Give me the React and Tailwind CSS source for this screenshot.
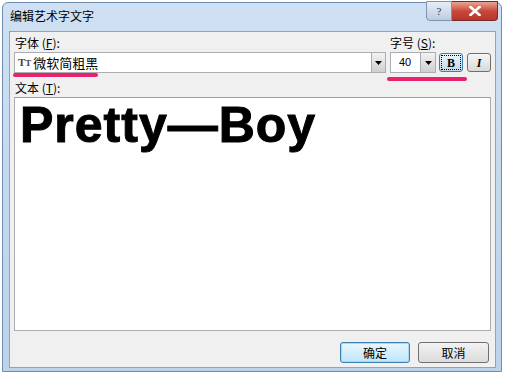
import React from "react";

const cjk = { fontFamily: '"Noto Sans CJK SC", "Liberation Sans", sans-serif' };

function Arrow() {
  return (
    <svg width="7" height="4" viewBox="0 0 7 4">
      <path d="M0 0 H7 L3.5 4 Z" fill="#000" />
    </svg>
  );
}

export default function App() {
  return (
    <div className="w-[506px] h-[377px] bg-white overflow-hidden relative" style={cjk}>
      <div className="absolute left-[2px] top-[2px] w-[500px] h-[370px] rounded-t-[6px] border border-[#6f8db0] bg-gradient-to-b from-[#cfe0f2] via-[#c4d8ee] to-[#bdd3ea] flex flex-col">
        {/* title bar */}
        <div className="h-[28px] flex items-start relative">
          <span className="ml-[7px] mt-[5px] text-[12px] leading-[16px] text-black">编辑艺术字文字</span>
          <div className="absolute right-[3px] -top-[2px] flex">
            <div className="w-[26px] h-[20px] rounded-bl-[4px] border border-[#7f93ab] bg-gradient-to-b from-[#e6eef7] to-[#bccde2] flex items-center justify-center text-[11px] text-[#333]" style={{ fontFamily: '"Liberation Serif", serif' }}>?</div>
            <div className="w-[46px] h-[20px] rounded-br-[4px] border border-[#7a2a22] border-l-0 bg-gradient-to-b from-[#e9a394] via-[#c9483a] to-[#b8352a] flex items-center justify-center">
              <svg width="12" height="10" viewBox="0 0 12 10">
                <path d="M1.5 1 L10.5 9 M10.5 1 L1.5 9" stroke="#fff" strokeWidth="2.6" strokeLinecap="square" />
              </svg>
            </div>
          </div>
        </div>
        {/* client */}
        <div className="ml-[6px] mr-[5px] h-[337px] bg-[#f0f0f0] border border-[#8ea4bd] relative">
          <div className="pl-[5px] pt-[4px] text-[12px] leading-[14px] text-black flex">
            <span className="w-[375px]">字体 (<span className="underline">F</span>):</span>
            <span>字号 (<span className="underline">S</span>):</span>
          </div>
          <div className="flex mt-[2px] pl-[4px] items-start">
            <div className="w-[372px] h-[21px] bg-white border border-[#abadb3] flex items-center">
              <span className="ml-[3px] text-[11px] font-bold text-[#444] leading-none" style={{ fontFamily: '"Liberation Serif", serif' }}>T<span className="text-[9px]">T</span></span>
              <span className="ml-[2px] text-[13px] leading-none">微软简粗黑</span>
              <div className="ml-auto w-[14px] h-[19px] border-l border-[#abadb3] bg-gradient-to-b from-[#f2f2f2] to-[#cfcfcf] flex items-center justify-center">
                <Arrow />
              </div>
            </div>
            <div className="ml-[4px] w-[46px] h-[21px] bg-white border border-[#abadb3] flex items-center">
              <span className="ml-[8px] text-[11px] leading-none" style={{ fontFamily: '"Liberation Sans", sans-serif' }}>40</span>
              <div className="ml-auto w-[15px] h-[19px] border-l border-[#abadb3] bg-gradient-to-b from-[#f2f2f2] to-[#cfcfcf] flex items-center justify-center">
                <Arrow />
              </div>
            </div>
            <div className="ml-[3px] mt-[1px] w-[24px] h-[19px] rounded-[3px] border border-[#3c7fb1] bg-gradient-to-b from-[#eaf6fd] to-[#c4d6e4] p-[1px]">
              <div className="w-full h-full border border-dotted border-black flex items-center justify-center text-[12px] font-bold leading-none" style={{ fontFamily: '"Liberation Serif", serif' }}>B</div>
            </div>
            <div className="ml-[4px] mt-[1px] w-[24px] h-[19px] rounded-[3px] border border-[#707070] bg-gradient-to-b from-[#f6f6f6] to-[#d9d9d9] flex items-center justify-center text-[12px] italic font-bold leading-none" style={{ fontFamily: '"Liberation Serif", serif' }}>I</div>
          </div>
          <div className="pl-[5px] mt-[8px] text-[12px] leading-[14px]">
            文本 (<span className="underline">T</span>):
          </div>
          <div className="ml-[4px] mt-[2px] w-[477px] h-[234px] bg-white border border-[#abadb3] border-t-[#a0a0a0]">
            <div className="ml-[5px] -mt-[1px] text-[50px] font-bold leading-[56px] text-black tracking-[1px] [-webkit-text-stroke:1px_black]" style={{ fontFamily: '"Liberation Sans", Arial, sans-serif' }}>
              Pretty—Boy
            </div>
          </div>
          <div className="flex justify-end mt-[11px] mr-[6px] gap-[8px]">
            <div className="w-[70px] h-[21px] rounded-[3px] border border-[#3c7fb1] bg-gradient-to-b from-[#eaf6fd] to-[#bee6fd] flex items-center justify-center text-[12px] shadow-[inset_0_0_0_1px_#a6d9f4]">确定</div>
            <div className="w-[71px] h-[21px] rounded-[3px] border border-[#707070] bg-gradient-to-b from-[#f2f2f2] to-[#dcdcdc] flex items-center justify-center text-[12px]">取消</div>
          </div>
          {/* highlight marks */}
          <div className="absolute left-[3px] top-[41px] w-[85px] h-[4px] rounded-full bg-[#e8226c]" />
          <div className="absolute left-[377px] top-[45px] w-[80px] h-[4px] rounded-full bg-[#e8226c]" />
        </div>
      </div>
    </div>
  );
}
